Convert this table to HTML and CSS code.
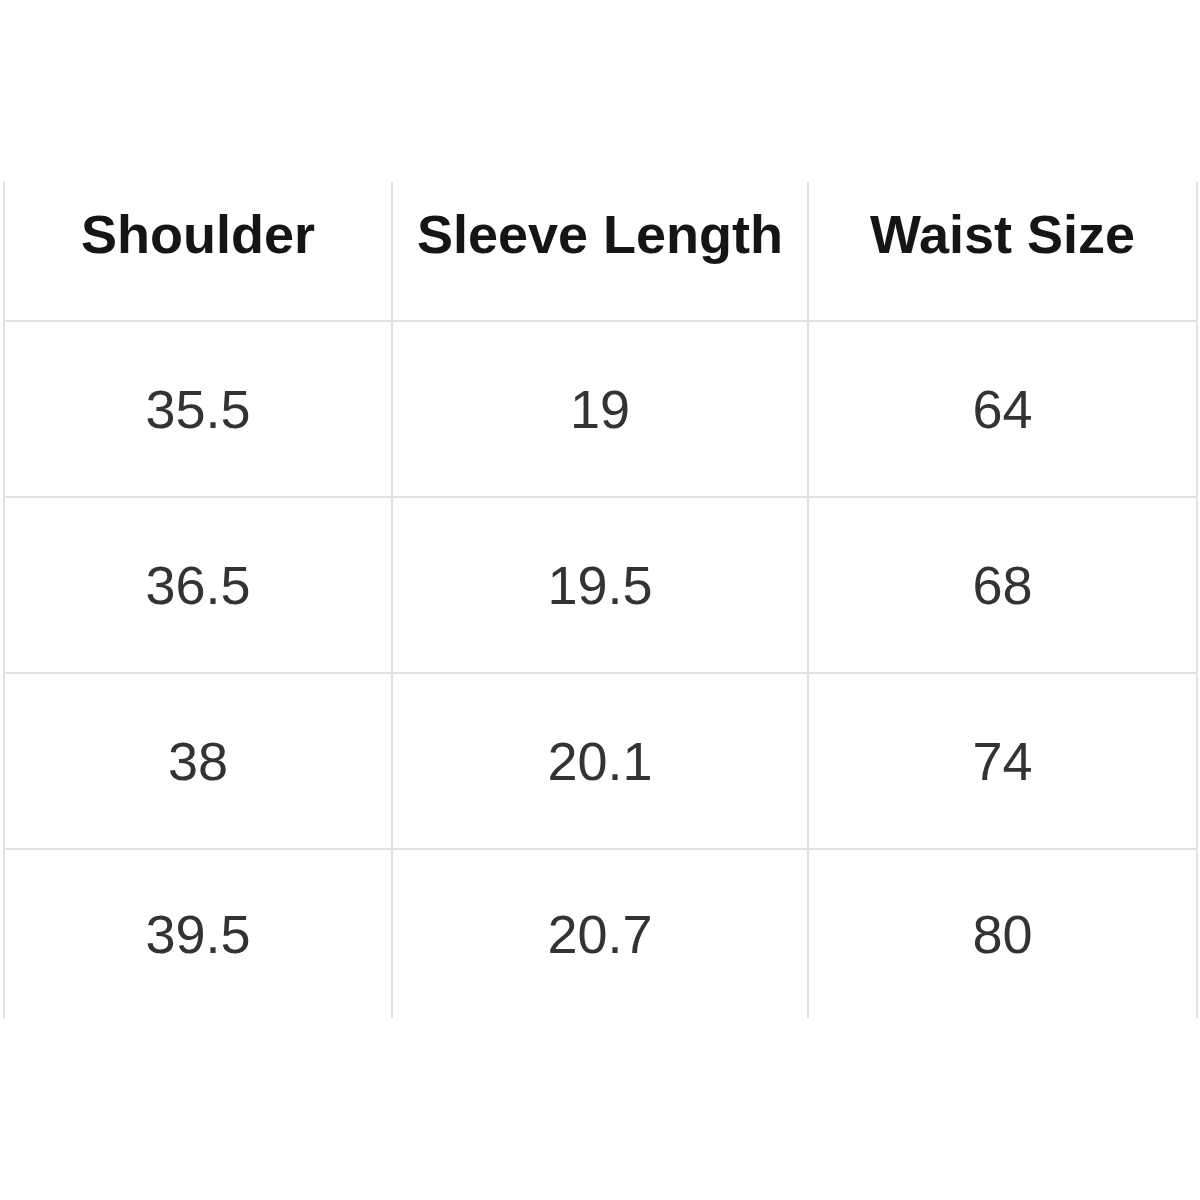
FILE: index.html
```html
<!DOCTYPE html>
<html>
<head>
<meta charset="utf-8">
<link rel="stylesheet" href="styles.css">
</head>
<body>
<div class="size-table">
  <div class="cell head">Shoulder</div>
  <div class="cell head">Sleeve Length</div>
  <div class="cell head">Waist Size</div>

  <div class="cell">35.5</div>
  <div class="cell">19</div>
  <div class="cell">64</div>

  <div class="cell">36.5</div>
  <div class="cell">19.5</div>
  <div class="cell">68</div>

  <div class="cell">38</div>
  <div class="cell">20.1</div>
  <div class="cell">74</div>

  <div class="cell last">39.5</div>
  <div class="cell last">20.7</div>
  <div class="cell last">80</div>
</div>
</body>
</html>
```

FILE: styles.css
```css
html, body {
  margin: 0;
  padding: 0;
  background: #ffffff;
}

body {
  width: 1200px;
  height: 1200px;
  font-family: "Liberation Sans", Arial, sans-serif;
}

.size-table {
  display: grid;
  grid-template-columns: 388px 416px 389px;
  margin-top: 182px;
  margin-left: 3px;
  width: max-content;
  border-left: 2px solid #e2e2e2;
}

.cell {
  box-sizing: border-box;
  height: 176px;
  border-top: 2px solid #e2e2e2;
  border-right: 2px solid #e2e2e2;
  display: flex;
  align-items: center;
  justify-content: center;
  font-size: 54px;
  color: #333333;
}

.cell.head {
  height: 138px;
  border-top: none;
  padding-bottom: 35px;
  font-weight: bold;
  color: #151515;
}

.cell.last {
  height: 170px;
}
```
